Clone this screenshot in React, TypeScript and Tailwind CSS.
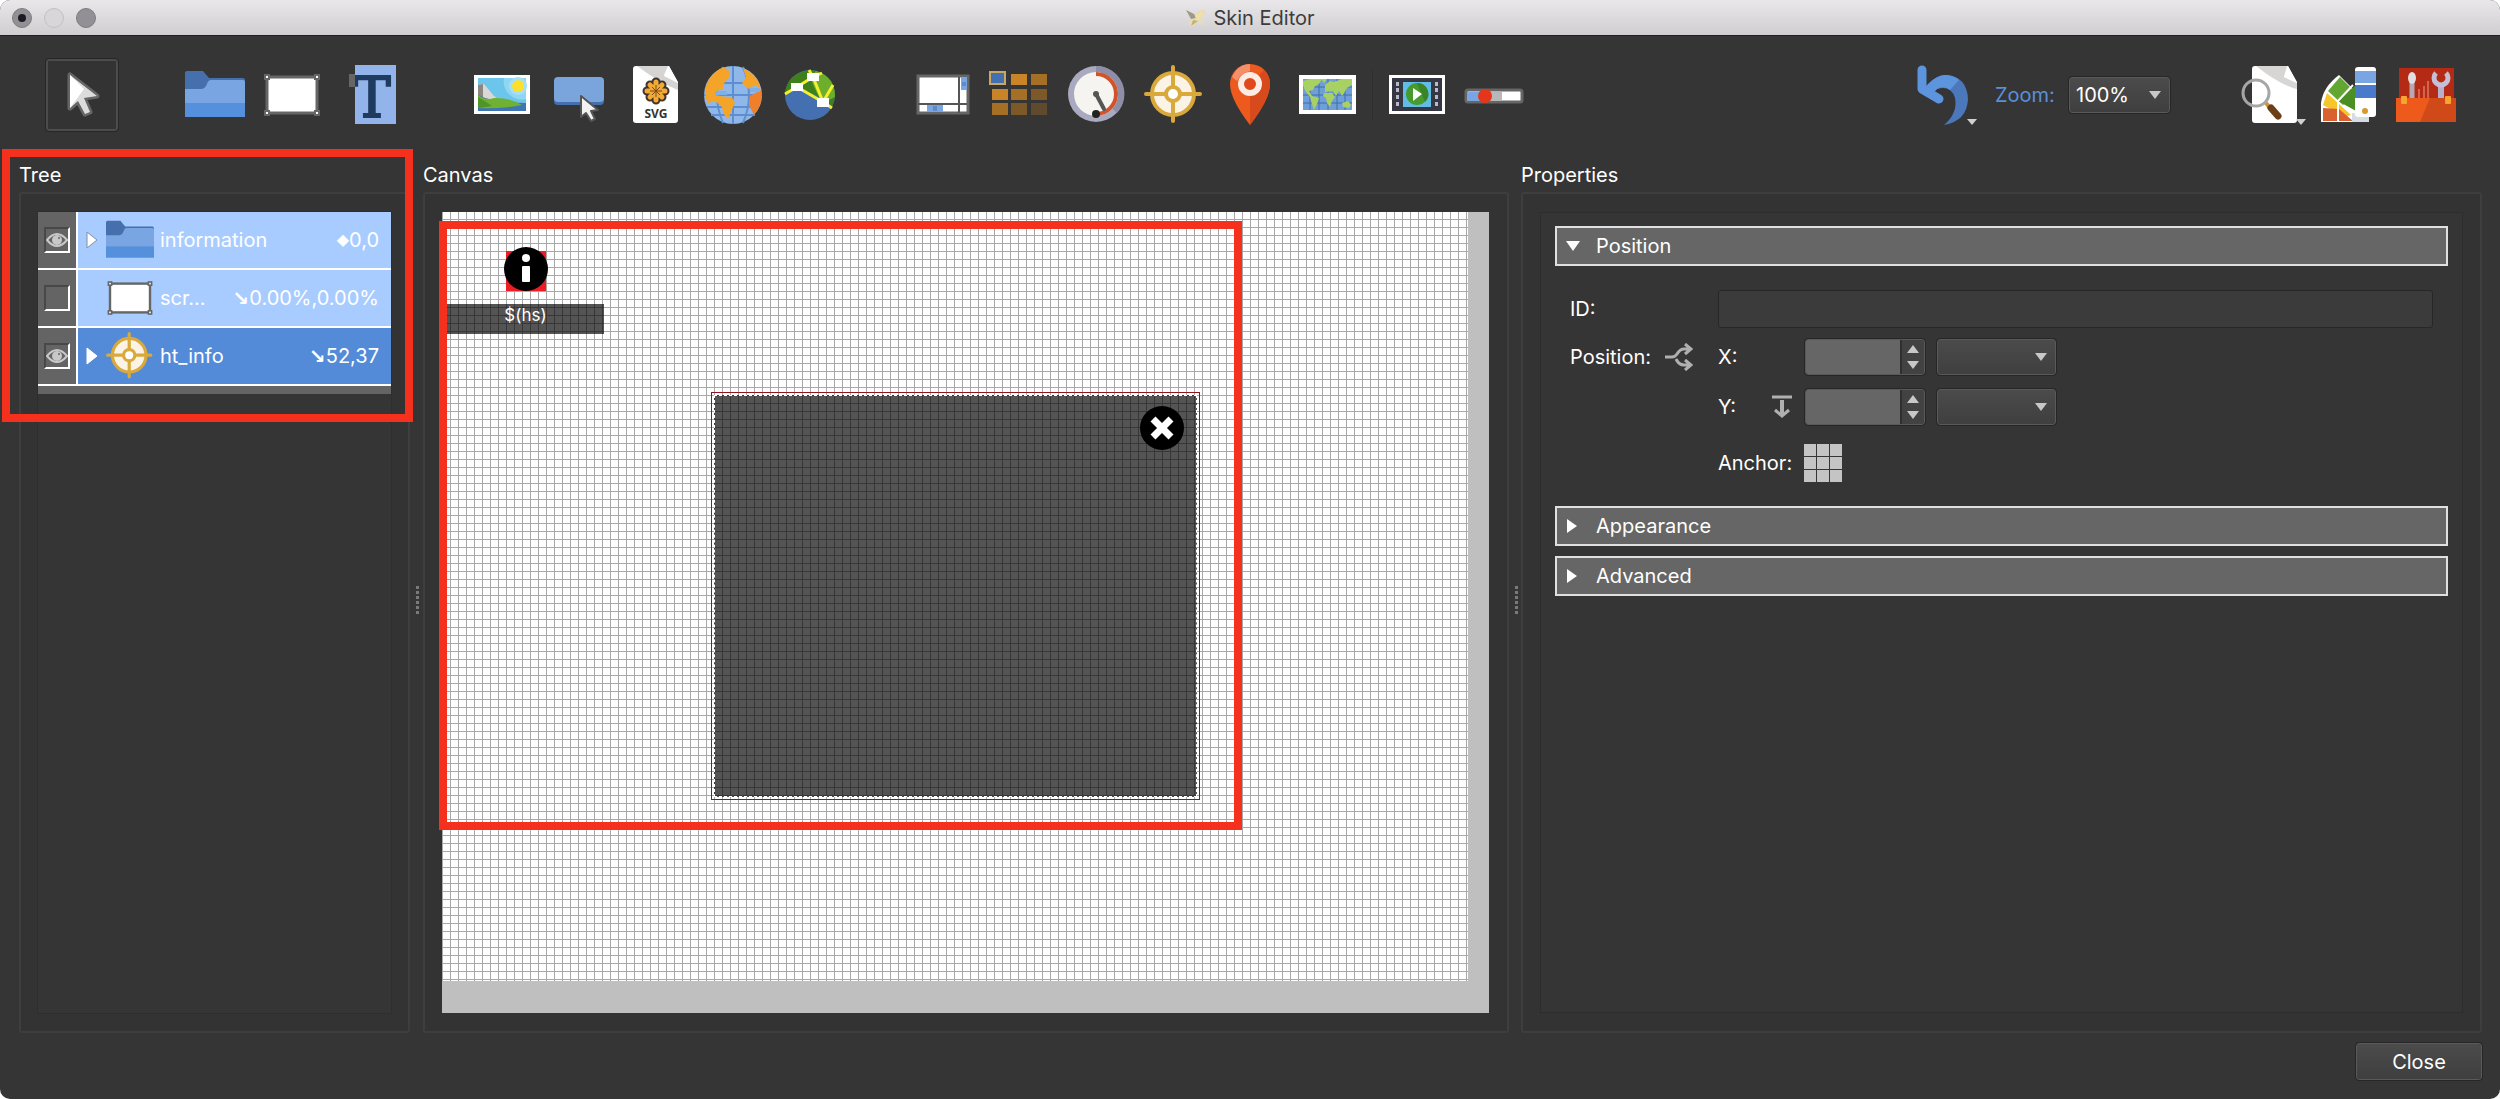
import React, { useState } from 'react';

interface IconProps {
  className?: string;
}

interface TreeRow {
  id: string;
  name: string;
  anchor: string;
  position: string;
  visible: boolean;
  expandable: boolean;
  selected: boolean;
  icon: React.FC<IconProps>;
}

const Svg: React.FC<React.PropsWithChildren<IconProps>> = ({ className = 'w-[60px] h-[60px]', children }) => (
  <svg viewBox="0 0 60 60" overflow="visible" className={className} aria-hidden="true">
    {children}
  </svg>
);

/* ---------- toolbar icons ---------- */

const PointerIcon = () => (
  <Svg>
    <path d="M18 10V43L26 36L33 49L38 47L32 33L45 31Z" fill="#dcdcdc" stroke="#666" strokeWidth="5" strokeLinejoin="round" />
    <path d="M18 10V43L26 36L33 49L38 47L32 33L45 31Z" fill="#dcdcdc" />
    <path d="M18 10V43L32 24Z" fill="#fff" />
  </Svg>
);

const FolderIcon: React.FC<IconProps> = ({ className }) => (
  <Svg className={className}>
    <path d="M0 8Q0 6 2 6H18L24 13H58Q60 13 60 16V30H0Z" fill="#466fae" />
    <path d="M0 24H16Q20 24 22 19Q23 15 26 15H58Q60 15 60 17V52H0Z" fill="#79a5e2" />
    <rect y="38" width="60" height="14" fill="#5590dd" />
  </Svg>
);

const RectIcon: React.FC<IconProps> = ({ className }) => (
  <Svg className={className}>
    <rect x="5" y="12" width="50" height="36" fill="#fff" stroke="#666" strokeWidth="3" />
    {[[5, 12], [55, 12], [5, 48], [55, 48]].map(([x, y]) => (
      <rect key={`${x}-${y}`} x={x - 2} y={y - 2} width="4" height="4" fill="#fff" stroke="#666" strokeWidth="2" />
    ))}
  </Svg>
);

const TextIcon = () => (
  <Svg>
    <rect x="16" width="41" height="59" fill="#93b4ea" />
    <text x="33" y="52" fontSize="56" textAnchor="middle" fill="#1f3b60" stroke="#1f3b60" strokeWidth="2" fontFamily="DejaVu Serif, serif">T</text>
    <rect x="10" y="9" width="6" height="13" fill="#666" />
  </Svg>
);

const ImageIcon = () => (
  <Svg>
    <rect x="2" y="10" width="56" height="39" fill="#fff" />
    <rect x="6" y="13" width="48" height="33" fill="#6cc5ea" />
    <path d="M54 34A18 18 0 0 1 32 13H54Z" fill="#8fd6f2" />
    <circle cx="46" cy="21" r="9" fill="#a5dff5" />
    <circle cx="46" cy="21" r="6" fill="#fde02c" />
    <path d="M6 20L12 19L22 31L30 37H6Z" fill="#dad8d6" />
    <path d="M6 20L11 19V32H6Z" fill="#8b8680" />
    <path d="M6 30Q22 38 54 38V46H6Z" fill="#3f74b5" />
    <path d="M6 30Q14 36 22 33Q36 32 50 40Q30 44 6 43Z" fill="#6fb133" />
    <path d="M6 32Q16 38 20 41L6 43Z" fill="#4e9427" />
  </Svg>
);

const ButtonIcon = () => (
  <Svg>
    <rect x="5" y="14" width="50" height="26" rx="4" fill="#466fae" />
    <rect x="5" y="12" width="50" height="25" rx="4" fill="#79a5dc" />
    <path d="M32 31V52L37 48L42 56L46 54L42 46L49 45Z" fill="#f2f2f2" stroke="#555" strokeWidth="2" strokeLinejoin="round" />
  </Svg>
);

const SvgFileIcon = () => (
  <Svg>
    <path d="M10 1H43L52 17V55Q52 58 49 58H10Q7 58 7 55V4Q7 1 10 1Z" fill="#fff" />
    <path d="M11 1H42L38 10L52 18V25Q34 18 11 1Z" fill="#d6d4d2" />
    <path d="M43 1L52 18L38 11Z" fill="#fff" />
    <g stroke="#40342c" strokeWidth="9" strokeLinecap="round">
      <path d="M30 17V35M21 26H39M24 20L36 32M36 20L24 32" />
    </g>
    <g stroke="#f2a935" strokeWidth="5" strokeLinecap="round">
      <path d="M30 17V35M21 26H39M24 20L36 32M36 20L24 32" />
    </g>
    <path d="M30 20V32M24 26H36M26 22L34 30M34 22L26 30" stroke="#7a4a18" strokeWidth="1" />
    <text x="30" y="53" fontSize="12" fontWeight="bold" textAnchor="middle" fill="#333" fontFamily="Open Sans, sans-serif">SVG</text>
  </Svg>
);

const GlobeIcon = () => (
  <Svg>
    <circle cx="30" cy="30" r="29" fill="#8fb7ea" />
    <path d="M30 1V59M4 18H56M1 30H59M4 42H56M8 50H52M20 2Q8 30 20 58M40 2Q52 30 40 58" fill="none" stroke="#5d8fd0" strokeWidth="2" />
    <path d="M21 2Q30 7 26 13Q20 17 20 24Q14 24 12 30Q20 32 28 32Q34 36 30 42L25 54Q20 50 19 42L12 36L5 38Q0 30 4 18Q11 5 21 2Z" fill="#f5a42a" />
    <path d="M40 3Q55 10 58 24L52 20L46 24L39 18L43 12Z" fill="#f5a42a" />
    <path d="M47 31L58 25Q61 38 51 50L46 40Z" fill="#ef7f2b" />
    <path d="M12 28H24M47 25H57" stroke="#7cb0ea" strokeWidth="4" />
  </Svg>
);

const MapLinksIcon = () => (
  <Svg>
    <circle cx="30" cy="30" r="25" fill="#4470b2" />
    <path d="M5 29Q7 8 30 5Q55 8 55 31Q54 38 51 43Q36 26 20 26Q10 26 5 29Z" fill="#3f7f1c" />
    <path d="M36 6Q55 12 55 32L43 38Q36 28 30 12Z" fill="#6fae2a" />
    <path d="M5 29L17 22L33 12L29 5M33 12L42 8M33 12L43 37L17 22M43 37L53 20M43 37L52 43" fill="none" stroke="#f3f02c" strokeWidth="3" />
    <rect x="11" y="18" width="12" height="8" fill="#fff" />
    <rect x="27" y="8" width="12" height="8" fill="#fff" />
    <rect x="37" y="33" width="12" height="9" fill="#fff" />
  </Svg>
);

const ScrollAreaIcon = () => (
  <Svg>
    <rect x="5" y="11" width="50" height="37" fill="#fff" stroke="#666" strokeWidth="3" />
    <rect x="48" y="12" width="6" height="13" fill="#79a5e2" />
    <rect x="14" y="40" width="16" height="7" fill="#79a5e2" />
    <path d="M46 12V48M5 39H54" stroke="#555" strokeWidth="2" />
    <path d="M21 41V46M23 41V46M49 18H53M49 20H53" stroke="#466fae" strokeWidth="1" />
  </Svg>
);

const ClonerIcon = () => (
  <Svg>
    <rect x="0" y="7" width="15" height="12" fill="#4470b2" stroke="#c9a866" strokeWidth="2" />
    <rect x="21" y="9" width="16" height="11" fill="#c98427" />
    <rect x="41" y="9" width="16" height="11" fill="#a56f25" />
    <rect x="2" y="24" width="16" height="11" fill="#c98427" />
    <rect x="21" y="24" width="16" height="11" fill="#a56f25" />
    <rect x="41" y="24" width="16" height="11" fill="#7d592a" />
    <rect x="2" y="38" width="16" height="12" fill="#a56f25" />
    <rect x="21" y="38" width="16" height="12" fill="#7d592a" />
    <rect x="41" y="38" width="16" height="12" fill="#5f4a2e" />
  </Svg>
);

const GaugeIcon = () => (
  <Svg>
    <circle cx="29" cy="29" r="28" fill="#a9a9bf" />
    <path d="M29 1A28 28 0 0 1 50 48L29 29Z" fill="#8e8ea8" />
    <circle cx="29" cy="29" r="22" fill="#f6f4f0" />
    <path d="M29 9A20 20 0 0 1 29 49" fill="none" stroke="#d0532a" strokeWidth="4" />
    <path d="M29 29L37 44" stroke="#555" strokeWidth="4" strokeLinecap="round" />
    <circle cx="29" cy="29" r="3" fill="#555" />
    <circle cx="29" cy="49" r="4" fill="#222" />
  </Svg>
);

const HotspotIcon: React.FC<IconProps> = ({ className }) => (
  <Svg className={className}>
    <circle cx="29" cy="29" r="21" fill="#fbf3e6" stroke="#d9a93c" strokeWidth="4" />
    <path d="M29 2V56M2 29H56" stroke="#d9a93c" strokeWidth="4" strokeLinecap="round" />
    <circle cx="29" cy="29" r="7" fill="#fff" stroke="#d9a93c" strokeWidth="4" />
  </Svg>
);

const PinIcon = () => (
  <Svg>
    <path d="M29 60Q9 34 9 19A20 20 0 0 1 49 19Q49 34 29 60Z" fill="#ee5a1e" />
    <path d="M29 19L43 5Q49 10 49 19Q49 34 29 60Z" fill="#d64a1c" />
    <path d="M11 12Q17 -1 29 -1L29 6Q20 8 16 16Z" fill="#f58e6a" />
    <circle cx="29" cy="19" r="9" fill="#e0491a" stroke="#fdece4" strokeWidth="6" />
  </Svg>
);

const MapIcon = () => (
  <Svg>
    <rect x="1" y="10" width="57" height="39" fill="#fff" />
    <rect x="5" y="14" width="49" height="31" fill="#6f9fd8" />
    <path d="M12 14V45M21 14V45M30 14V45M39 14V45M47 14V45M5 22H54M5 30H54M5 38H54" stroke="#426da8" strokeWidth="1" />
    <path d="M5 16L12 14H24L21 19L17 21L15 25L11 26L14 31L21 33L19 39L16 45L14 39L12 32L8 27L5 21ZM26 28L34 28L37 32L34 36L32 42L29 38L28 33L25 31ZM27 20L32 16L36 17L44 14H54V20L49 23L46 28L44 31L41 26L38 31L35 26L27 27ZM44 38L50 36L53 40L51 43L45 42ZM23 14H29L26 18Z" fill="#a8d163" />
  </Svg>
);

const VideoIcon = () => (
  <Svg>
    <rect x="2" y="10" width="56" height="39" fill="#fff" />
    <rect x="5" y="13" width="50" height="33" fill="#353742" />
    <rect x="16" y="17" width="28" height="25" fill="#62bde6" />
    {[18, 24, 31, 38].map((y) => (
      <g key={y} fill="#b9b9cc">
        <rect x="9" y={y - 1} width="3" height="4" />
        <rect x="48" y={y - 1} width="3" height="4" />
      </g>
    ))}
    <circle cx="30" cy="29" r="11" fill="#469a2e" />
    <path d="M30 18A11 11 0 0 1 38 37Z" fill="#3a8426" />
    <path d="M26 23V36L35 29Z" fill="#fff" />
  </Svg>
);

const SeekbarIcon = () => (
  <Svg>
    <rect x="2" y="25" width="56" height="12" rx="2" fill="#fff" stroke="#666" strokeWidth="3" />
    <rect x="3" y="27" width="14" height="9" fill="#79a5e2" />
    <rect x="22" y="27" width="16" height="9" fill="#b8b8b8" />
    <circle cx="21" cy="31" r="7" fill="#e5361c" />
  </Svg>
);

const UndoIcon = () => (
  <Svg>
    <path d="M9 26Q22 9 34 10Q54 12 55 34Q54 56 31 60Q45 48 42 33Q38 20 24 24L18 30Z" fill="#4a78ba" />
    <path d="M9 26Q22 9 34 10Q42 11 46 15L37 25Q31 20 24 24L18 30Z" fill="#5c94de" />
    <path d="M9 5V24L26 34" fill="none" stroke="#5c94de" strokeWidth="9" strokeLinecap="round" strokeLinejoin="round" />
  </Svg>
);

const PreviewIcon = () => (
  <Svg>
    <path d="M13 1H46L55 17V55Q55 58 52 58H13Q10 58 10 55V4Q10 1 13 1Z" fill="#fff" />
    <path d="M14 1H45L42 12L55 18V24Q38 20 14 1Z" fill="#d8d6d4" />
    <path d="M46 1L55 18L42 12Z" fill="#fff" />
    <circle cx="14" cy="28" r="12" fill="#fff" />
    <path d="M10 17Q2 20 2 28Q2 36 10 39Z" fill="#353535" />
    <circle cx="14" cy="28" r="13" fill="none" stroke="#a6a6a6" strokeWidth="3" />
    <path d="M24 38L28 43" stroke="#d29332" strokeWidth="4" />
    <path d="M29 43L36 51" stroke="#6b4018" strokeWidth="7" strokeLinecap="round" />
  </Svg>
);

const PaletteIcon = () => (
  <Svg>
    <path d="M2 57V38Q4 22 20 10L38 28V57Z" fill="#fff" />
    <path d="M21 12L37 28L24 40L9 26Z" fill="#62a732" />
    <path d="M19 36L37 20V46Z" fill="#4a8f24" />
    <path d="M8 28L32 50L26 52L4 40Z" fill="#f6c62b" />
    <path d="M4 43L20 44L34 56H4Z" fill="#d9602f" />
    <path d="M19 57V36L34 20" fill="none" stroke="#fff" strokeWidth="2" />
    <path d="M33 48L50 50V57H33Z" fill="#d5dde2" />
    <rect x="36" y="2" width="21" height="50" rx="3" fill="#fff" />
    <rect x="36" y="6" width="21" height="12" fill="#79a5e2" />
    <rect x="36" y="20" width="21" height="13" fill="#4a7acb" />
    <circle cx="46" cy="46" r="3" fill="#d9982c" />
  </Svg>
);

const ToolboxIcon = () => (
  <Svg>
    <rect x="3" y="3" width="55" height="34" fill="#b52a14" />
    <path d="M16 18V36" stroke="#b6a9b4" strokeWidth="5" />
    <ellipse cx="16" cy="13" rx="4" ry="6" fill="#e2dde2" />
    <path d="M23 24V36M28 21V36M32 16V36" stroke="#f0a08c" strokeWidth="1" />
    <path d="M45 20V36" stroke="#b6b0cc" strokeWidth="6" />
    <path d="M40 8A7 7 0 1 0 50 8" fill="none" stroke="#c4bfd6" strokeWidth="5" />
    <path d="M0 33H60V57H0Z" fill="#ee5a1c" />
    <path d="M34 33H60V57H24Z" fill="#cf4a18" />
    <rect x="5" y="31" width="6" height="8" rx="1" fill="#f5a52e" />
    <rect x="49" y="31" width="6" height="8" rx="1" fill="#f5a52e" />
  </Svg>
);

/* ---------- small glyphs ---------- */

const DownTriangle: React.FC<IconProps> = ({ className = 'text-[#c8c8c8]' }) => (
  <svg width="12" height="8" viewBox="0 0 12 8" className={className} aria-hidden="true">
    <path d="M0 0H12L6 8Z" fill="currentColor" />
  </svg>
);

const EyeIcon = () => (
  <svg viewBox="0 0 22 18" className="w-[22px] h-[18px] pointer-events-none [grid-area:1/1]" aria-hidden="true">
    <path d="M1 9Q11 -3 21 9Q11 21 1 9Z" fill="none" stroke="#c8c8c8" strokeWidth="2" />
    <circle cx="11" cy="9" r="5" fill="#c8c8c8" />
    <circle cx="13" cy="7" r="1" fill="#666" />
  </svg>
);

const AppIcon = () => (
  <svg viewBox="0 0 22 20" className="w-[22px] h-5" aria-hidden="true">
    <path d="M1 2L9 6L18 1L21 4L17 10L20 17L12 15L6 19L3 15L6 11Z" fill="#e3dcc2" />
    <path d="M1 2L9 6L11 10L6 11Z" fill="#9c9a8a" />
    <path d="M10 8L18 2L17 8L12 12Z" fill="#f3e0a0" />
    <path d="M6 18L8 12L13 13Z" fill="#c9b264" />
  </svg>
);

/* ---------- form parts ---------- */

interface SelectProps {
  label: string;
  options: string[];
  className: string;
  disabled?: boolean;
}

const Select: React.FC<SelectProps> = ({ label, options, className, disabled }) => (
  <div className="grid items-center shrink-0">
    <select
      aria-label={label}
      disabled={disabled}
      className={`[grid-area:1/1] appearance-none h-9 rounded-[3px] border border-[#5a5a5a] bg-linear-to-b from-[#4b4b4b] to-[#3f3f3f] outline outline-[#262626] text-white pl-1.5 ${className}`}
    >
      {options.map((option) => (
        <option key={option}>{option}</option>
      ))}
    </select>
    <DownTriangle className="[grid-area:1/1] justify-self-end mr-[9px] text-[#c8c8c8] pointer-events-none" />
  </div>
);

const SpinBox: React.FC<{ label: string }> = ({ label }) => (
  <div className="flex w-[120px] h-9 rounded-[3px] border border-[#5a5a5a] bg-[#424242] outline outline-[#262626] overflow-hidden">
    <input type="text" aria-label={label} disabled className="flex-1 min-w-0 bg-[#666]" />
    <div className="w-6 flex flex-col items-center justify-center gap-2 border-l-2 border-[#303030]">
      <button aria-label={`${label} up`} className="rotate-180">
        <DownTriangle />
      </button>
      <button aria-label={`${label} down`}>
        <DownTriangle />
      </button>
    </div>
  </div>
);

interface SectionProps {
  title: string;
  open?: boolean;
}

const SectionHeader: React.FC<SectionProps> = ({ title, open = false }) => (
  <button
    aria-expanded={open}
    className="flex items-center w-full h-10 border-2 border-[#e0e0e0] bg-[#666] pl-[9px] text-left shrink-0"
  >
    <span className="w-[30px]">
      {open ? (
        <svg width="14" height="10" viewBox="0 0 14 10" aria-hidden="true"><path d="M0 0H14L7 10Z" fill="#fff" /></svg>
      ) : (
        <svg width="12" height="14" viewBox="0 0 12 14" aria-hidden="true"><path d="M1 0L11 7L1 14Z" fill="#fff" /></svg>
      )}
    </span>
    {title}
  </button>
);

const ToolButton: React.FC<React.PropsWithChildren<{ label: string; active?: boolean; menu?: boolean }>> = ({
  label,
  active,
  menu,
  children,
}) => (
  <button
    aria-label={label}
    className={`relative w-18 h-18 shrink-0 flex items-center justify-center rounded-[3px] ${
      active ? 'border-2 border-[#4c4c4c] bg-[#333] outline outline-[#262626]' : ''
    }`}
  >
    {children}
    {menu && (
      <svg width="10" height="6" viewBox="0 0 10 6" className="absolute right-0.5 bottom-1.5" aria-hidden="true">
        <path d="M0 0H10L5 6Z" fill="#d0d0d0" />
      </svg>
    )}
  </button>
);

const Splitter = () => (
  <div className="flex flex-col items-center justify-center gap-0.5 pt-1 pl-0.5">
    {[0, 1, 2, 3, 4, 5].map((dot) => (
      <span key={dot} className="w-[3px] h-[3px] bg-[#7a7a7a]" />
    ))}
  </div>
);

const Panel: React.FC<React.PropsWithChildren<{ title: string }>> = ({ title, children }) => (
  <section className="relative flex flex-col min-w-0 min-h-0">
    <h2 className="h-6 mb-[5px]">{title}</h2>
    <div className="flex-1 min-h-0 flex border-2 border-[#3e3e3e] rounded-[3px] bg-[#333] px-[17px] py-[18px]">{children}</div>
  </section>
);

/* ---------- tree ---------- */

const initialRows: TreeRow[] = [
  { id: 'information', name: 'information', anchor: '◆', position: '0,0', visible: true, expandable: true, selected: false, icon: FolderIcon },
  { id: 'screentint', name: 'scr...', anchor: '↘', position: '0.00%,0.00%', visible: false, expandable: false, selected: false, icon: RectIcon },
  { id: 'ht_info', name: 'ht_info', anchor: '↘', position: '52,37', visible: true, expandable: true, selected: true, icon: HotspotIcon },
];

const Tree = () => {
  const [rows, setRows] = useState(initialRows);

  const toggle = (id: string) =>
    setRows(rows.map((row) => (row.id === id ? { ...row, visible: !row.visible } : row)));

  return (
    <ul className="flex-1 min-w-0 outline outline-[#2e2e2e] bg-[#353535]">
      {rows.map((row) => {
        const Icon = row.icon;
        return (
          <li key={row.id} className="flex h-[58px] border-b-2 border-white">
            <label className="w-[38px] shrink-0 grid place-items-center bg-[#646464]">
              <input
                type="checkbox"
                aria-label={`Show ${row.name}`}
                checked={row.visible}
                onChange={() => toggle(row.id)}
                className="[grid-area:1/1] appearance-none w-[26px] h-[26px] border-t-2 border-l-2 border-b-2 border-r-2 border-t-[#484848] border-l-[#484848] border-b-white border-r-white"
              />
              {row.visible && <EyeIcon />}
            </label>
            <div
              className={`flex-1 min-w-0 flex items-center border-l-2 border-white pl-2 pr-3 ${
                row.selected ? 'bg-[#548bd9]' : 'bg-[#a8ccff]'
              }`}
            >
              <span className="w-5 shrink-0">
                {row.expandable && (
                  <svg width="12" height="18" viewBox="0 0 12 18" aria-hidden="true">
                    <path d="M1 1L11 9L1 17Z" fill="#fff" stroke={row.selected ? '#fff' : '#7f8ea6'} />
                  </svg>
                )}
              </span>
              <Icon className="w-12 h-12 shrink-0" />
              <span className="ml-1.5 text-white truncate">{row.name}</span>
              <span className="ml-auto flex items-center text-white">
                <span className={`font-[DejaVu_Sans] ${row.anchor === '◆' ? 'text-base' : 'text-xl leading-6 font-bold'}`}>
                  {row.anchor}
                </span>
                {row.position}
              </span>
            </div>
          </li>
        );
      })}
      <li aria-hidden="true" className="h-2 bg-[#646464]" />
    </ul>
  );
};

/* ---------- canvas ---------- */

const Canvas = () => (
  <div className="flex-1 min-w-0 bg-[#bfbfbf] pr-[21px] pb-8 mr-px">
    <div className="relative h-full bg-white bg-[linear-gradient(to_right,transparent_7px,#a8a8a8_7px),linear-gradient(to_bottom,transparent_7px,#a8a8a8_7px)] bg-size-[8px_8px] bg-position-[1px_0]">
      <div className="absolute left-[64px] top-[39px] w-10 h-10 bg-[#ee1c25]" />
      <svg viewBox="0 0 44 44" className="absolute left-[62px] top-[35px] w-11 h-11" aria-label="Info">
        <circle cx="22" cy="22" r="22" />
        <circle cx="22" cy="11" r="4" fill="#fff" />
        <rect x="18" y="19" width="8" height="16" rx="1" fill="#fff" />
      </svg>
      <div className="absolute left-[5px] top-[92px] w-[157px] h-[30px] bg-black/67 text-white text-[17px] leading-[22px] text-center">
        $(hs)
      </div>

      <div className="absolute left-[269px] top-[180px] w-[489px] h-[408px] border border-[#8f1420] p-0.5">
        <div className="w-full h-full border border-dashed border-white bg-black/67" />
      </div>
      <svg viewBox="0 0 44 44" className="absolute left-[698px] top-[194px] w-11 h-11" aria-label="Close popup">
        <circle cx="22" cy="22" r="22" />
        <path d="M13 13L31 31M31 13L13 31" stroke="#fff" strokeWidth="7" />
      </svg>

      {/* highlight frame */}
      <div className="absolute left-[-3px] top-[9px] w-[803px] h-[609px] border-8 border-[#f5301d] pointer-events-none" />
    </div>
  </div>
);

/* ---------- properties ---------- */

const Properties = () => (
  <div className="flex-1 min-w-0 flex flex-col border border-[#2d2d2d] bg-[#353535] px-[14px] pt-[13px]">
    <SectionHeader title="Position" open />

    <div className="flex flex-col px-[15px]">
      <div className="flex items-center h-[38px] mt-6">
        <label htmlFor="item-id" className="w-[148px]">ID:</label>
        <input
          id="item-id"
          type="text"
          disabled
          className="flex-1 h-[38px] rounded-[3px] border border-[#272727] bg-[#3b3b3b] px-2"
        />
      </div>

      <div className="flex items-center h-[50px] mt-1">
        <span className="w-[95px]">Position:</span>
        <span className="w-[53px]">
          <svg width="28" height="28" viewBox="0 0 28 28" fill="none" stroke="#b0b0b0" strokeWidth="3" aria-hidden="true">
            <path d="M0 14H7Q10 14 12 11Q15 6 19 6H25M11 16Q14 22 19 22H25M20 1L26 6L20 11M20 17L26 22L20 27" />
          </svg>
        </span>
        <span className="w-[87px]">X:</span>
        <SpinBox label="X" />
        <div className="w-3" />
        <Select label="X unit" options={['']} className="w-[119px]" disabled />
      </div>

      <div className="flex items-center h-[50px] pl-[148px]">
        <span className="w-[52px]">Y:</span>
        <span className="w-[35px]">
          <svg width="24" height="24" viewBox="0 0 24 24" fill="none" stroke="#b0b0b0" aria-hidden="true">
            <path d="M2 2H22" strokeWidth="3" />
            <path d="M12 5V21" strokeWidth="4" />
            <path d="M5 15L12 21L19 15" strokeWidth="3" />
          </svg>
        </span>
        <SpinBox label="Y" />
        <div className="w-3" />
        <Select label="Y unit" options={['']} className="w-[119px]" disabled />
      </div>

      <div className="flex items-center h-[62px] pl-[148px]">
        <span className="w-[86px]">Anchor:</span>
        <button aria-label="Anchor" className="grid grid-cols-3 gap-px">
          {[0, 1, 2, 3, 4, 5, 6, 7, 8].map((cell) => (
            <span key={cell} className="w-3 h-3 bg-[#c4c4c4]" />
          ))}
        </button>
      </div>
    </div>

    <div className="flex flex-col gap-2.5 mt-3">
      <SectionHeader title="Appearance" />
      <SectionHeader title="Advanced" />
    </div>
  </div>
);

/* ---------- window ---------- */

const Toolbar = () => (
  <div role="toolbar" className="flex items-center justify-between pl-[46px] pr-[38px] pt-[23px] pb-6">
    <div className="flex items-center gap-[61px]">
      <ToolButton label="Select" active><PointerIcon /></ToolButton>
      <div className="flex gap-[5px]">
        <ToolButton label="Container"><FolderIcon /></ToolButton>
        <ToolButton label="Rectangle"><RectIcon /></ToolButton>
        <ToolButton label="Text"><TextIcon /></ToolButton>
      </div>
      <div className="flex gap-[5px]">
        <ToolButton label="Image"><ImageIcon /></ToolButton>
        <ToolButton label="Button"><ButtonIcon /></ToolButton>
        <ToolButton label="Svg"><SvgFileIcon /></ToolButton>
        <ToolButton label="External image"><GlobeIcon /></ToolButton>
        <ToolButton label="Node marker"><MapLinksIcon /></ToolButton>
      </div>
      <div className="flex items-center gap-[5px]">
        <ToolButton label="Scroll area"><ScrollAreaIcon /></ToolButton>
        <ToolButton label="Cloner"><ClonerIcon /></ToolButton>
        <ToolButton label="Timer"><GaugeIcon /></ToolButton>
        <ToolButton label="Hotspot template"><HotspotIcon /></ToolButton>
        <ToolButton label="Marker"><PinIcon /></ToolButton>
        <ToolButton label="Map"><MapIcon /></ToolButton>
        <div className="w-px h-[50px] mx-[3px] bg-[#2e2e2e]" />
        <ToolButton label="Video"><VideoIcon /></ToolButton>
        <ToolButton label="Seekbar"><SeekbarIcon /></ToolButton>
      </div>
    </div>

    <div className="flex items-center">
      <ToolButton label="Undo" menu><UndoIcon /></ToolButton>
      <span className="ml-4 w-[74px] text-[#5a8fdc]">Zoom:</span>
      <Select label="Zoom" options={['100%', '200%', '50%']} className="w-[101px]" />
      <div className="flex gap-[5px] ml-[66px]">
        <ToolButton label="Live preview" menu><PreviewIcon /></ToolButton>
        <ToolButton label="Skin colors"><PaletteIcon /></ToolButton>
        <ToolButton label="Components toolbox"><ToolboxIcon /></ToolButton>
      </div>
    </div>
  </div>
);

export default function App() {
  return (
    <div className="h-screen bg-white">
      <div className="h-full flex flex-col rounded-[10px] overflow-hidden bg-[#353535] text-white text-xl leading-6 font-[Inter,sans-serif]">
        <header className="grid grid-cols-[1fr_auto_1fr] items-center h-9 shrink-0 bg-linear-to-b from-[#e9e7e9] to-[#d0ced0] border-b border-[#1f1f1f]">
          <div className="flex gap-3 pl-3">
            <button aria-label="Close window" className="w-5 h-5 rounded-full border border-[#7e7c80] bg-[#929094] flex items-center justify-center">
              <span className="w-2 h-2 rounded-full bg-[#1d1a26]" />
            </button>
            <button aria-label="Minimize window" className="w-5 h-5 rounded-full border border-[#c2c0c2] bg-[#d8d6d8]" />
            <button aria-label="Zoom window" className="w-5 h-5 rounded-full border border-[#7e7c80] bg-[#929094]" />
          </div>
          <h1 className="flex items-center gap-1.5 text-[#3c3c3c]">
            <AppIcon />
            Skin Editor
          </h1>
        </header>

        <Toolbar />

        <main className="flex-1 min-h-0 grid grid-cols-[391fr_13px_1086fr_12px_961fr] grid-rows-[minmax(0,1fr)] pl-[19px] pr-[18px] pt-2">
          <Panel title="Tree">
            <Tree />
            {/* highlight frame */}
            <div className="absolute left-[-17px] top-[-14px] w-[411px] h-[273px] border-8 border-[#f5301d] pointer-events-none z-10" />
          </Panel>
          <Splitter />
          <Panel title="Canvas">
            <Canvas />
          </Panel>
          <Splitter />
          <Panel title="Properties">
            <Properties />
          </Panel>
        </main>

        <footer className="flex justify-end pt-2.5 pb-[19px] pr-[18px] shrink-0">
          <button className="w-[126px] h-[37px] rounded-[3px] border border-[#5a5a5a] bg-linear-to-b from-[#4b4b4b] to-[#3f3f3f] outline outline-[#262626]">
            Close
          </button>
        </footer>
      </div>
    </div>
  );
}
